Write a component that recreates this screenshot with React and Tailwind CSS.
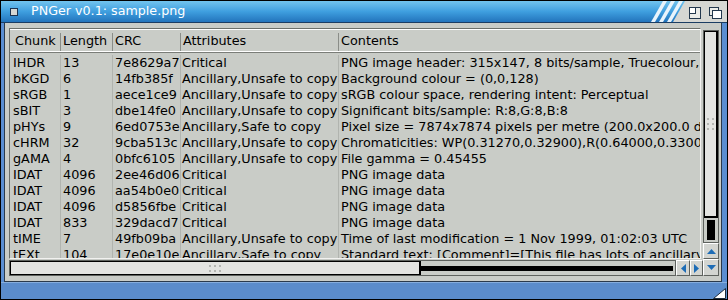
import React from 'react';

const chunks = [
  ['IHDR', '13', '7e8629a7', 'Critical', 'PNG image header: 315x147, 8 bits/sample, Truecolour, non-interlaced'],
  ['bKGD', '6', '14fb385f', 'Ancillary,Unsafe to copy', 'Background colour = (0,0,128)'],
  ['sRGB', '1', 'aece1ce9', 'Ancillary,Unsafe to copy', 'sRGB colour space, rendering intent: Perceptual'],
  ['sBIT', '3', 'dbe14fe0', 'Ancillary,Unsafe to copy', 'Significant bits/sample: R:8,G:8,B:8'],
  ['pHYs', '9', '6ed0753e', 'Ancillary,Safe to copy', 'Pixel size = 7874x7874 pixels per metre (200.0x200.0 dpi)'],
  ['cHRM', '32', '9cba513c', 'Ancillary,Unsafe to copy', 'Chromaticities: WP(0.31270,0.32900),R(0.64000,0.33000),G(0.30000,0.60000)'],
  ['gAMA', '4', '0bfc6105', 'Ancillary,Unsafe to copy', 'File gamma = 0.45455'],
  ['IDAT', '4096', '2ee46d06', 'Critical', 'PNG image data'],
  ['IDAT', '4096', 'aa54b0e0', 'Critical', 'PNG image data'],
  ['IDAT', '4096', 'd5856fbe', 'Critical', 'PNG image data'],
  ['IDAT', '833', '329dacd7', 'Critical', 'PNG image data'],
  ['tIME', '7', '49fb09ba', 'Ancillary,Unsafe to copy', 'Time of last modification = 1 Nov 1999, 01:02:03 UTC'],
  ['tEXt', '104', '17e0e10e', 'Ancillary,Safe to copy', 'Standard text: [Comment]=[This file has lots of ancillary chunks]'],
];

const headers = ['Chunk', 'Length', 'CRC', 'Attributes', 'Contents'];

const headCols = [
  'w-[51px] pl-[5px] border-r border-[#8a8d88]',
  'w-[52px] pl-[2px] border-r border-[#8a8d88]',
  'w-[68px] pl-[2px] border-r border-[#8a8d88]',
  'w-[158px] pl-[2px] border-r border-[#8a8d88]',
  'flex-1 min-w-0 pl-[2px]',
];

const bodyCols = [
  'w-[51px] pl-[3px] border-r border-[#b1b4af]',
  'w-[52px] pl-[2px] border-r border-[#b1b4af]',
  'w-[68px] pl-[2px] border-r border-[#b1b4af]',
  'w-[158px] pl-[1px] border-r border-[#b1b4af]',
  'flex-1 min-w-0 pl-[2px]',
];

const Grip = ({ cols, rows }) => (
  <div className="flex flex-col gap-[3px]">
    {Array.from({ length: rows }).map((_, r) => (
      <div key={r} className="flex gap-[3px]">
        {Array.from({ length: cols }).map((_, c) => (
          <span key={c} className="w-[2px] h-[2px] bg-[#b4b6b2]" />
        ))}
      </div>
    ))}
  </div>
);

const ArrowButton = ({ className, dir }) => {
  const pts = {
    up: '0,5 4.5,0 9,5',
    down: '0,0 9,0 4.5,5',
    left: '5,0 5,9 0,4.5',
    right: '0,0 0,9 5,4.5',
  }[dir];
  const vertical = dir === 'up' || dir === 'down';
  return (
    <div className={`flex items-center justify-center bg-[#d3d5d1] border-t border-l border-t-white border-l-white border-b border-r border-b-[#5e625e] border-r-[#5e625e] ${className}`}>
      <svg width={vertical ? 9 : 5} height={vertical ? 5 : 9}>
        <polygon points={pts} fill="#1d6cb6" />
      </svg>
    </div>
  );
};

const TitleStripes = () => (
  <svg width="44" height="21" className="block">
    <defs>
      <linearGradient id="tb" x1="0" y1="0" x2="0" y2="1">
        <stop offset="0" stopColor="#72c4ee" />
        <stop offset="0.5" stopColor="#3f9fdf" />
        <stop offset="1" stopColor="#2374bc" />
      </linearGradient>
    </defs>
    <rect width="44" height="21" fill="#d6d7d3" />
    <polygon points="0,0 44,0 32,21 0,21" fill="url(#tb)" />
    <polygon points="22,0 26,0 14,21 10,21" fill="#e8f4fc" />
    <polygon points="30,0 34,0 22,21 18,21" fill="#e8f4fc" />
    <polygon points="38,0 42,0 30,21 26,21" fill="#e8f4fc" />
  </svg>
);

const App = () => {
  return (
    <div className="w-[728px] h-[300px] bg-black p-px flex flex-col font-['DejaVu_Sans',sans-serif] text-black select-none overflow-hidden">
      {/* title bar */}
      <div className="h-[22px] flex border-b border-[#1b3d63]">
        <div className="flex-1 flex items-center bg-linear-to-b from-[#72c4ee] via-[#3f9fdf] to-[#2374bc]">
          <div className="ml-[9px] w-[8px] h-[8px] bg-[#d6d7d3] border border-[#1c3350]" />
          <span className="ml-[13px] text-[12.7px] leading-none text-white">PNGer v0.1: sample.png</span>
        </div>
        <TitleStripes />
        <div className="w-[42px] bg-[#d6d7d3] flex items-start pt-[6px]">
          <svg width="13" height="12" className="ml-[4px]">
            <rect x="0.5" y="0.5" width="11" height="11" fill="#eaebe8" stroke="#24384e" />
            <rect x="0.5" y="0.5" width="6" height="6" fill="#ffffff" stroke="#24384e" />
          </svg>
          <svg width="14" height="13" className="ml-[7px]">
            <rect x="0.5" y="0.5" width="9" height="8" fill="#eaebe8" stroke="#24384e" />
            <rect x="3.5" y="3.5" width="9" height="8" fill="#ffffff" stroke="#24384e" />
          </svg>
        </div>
      </div>

      {/* middle */}
      <div className="flex-1 flex min-h-0">
        <div className="w-[3px] bg-[#5a8ed2]" />
        <div className="flex-1 flex bg-[#c9ccc7] border-l border-r border-b border-[#2a3a4c] pl-[4px] pt-[5px] pr-[2px] pb-[5px] min-w-0">
          {/* list + horizontal scroller */}
          <div className="flex-1 flex flex-col min-w-0">
            <div className="h-[231px] mr-[2px] flex flex-col border border-t-[#6c706b] border-l-[#6c706b] border-b-[#f2f2f0] border-r-[#f2f2f0] overflow-hidden text-[12.8px] leading-[16px]">
              <div className="h-[23px] flex border-t border-b border-white pt-[3px]">
                {headers.map((h, i) => (
                  <div key={h} className={`${headCols[i]} whitespace-nowrap overflow-hidden`}>
                    {h}
                  </div>
                ))}
              </div>
              <div className="h-px bg-[#7a7d78]" />
              <div className="flex-1 flex flex-col pt-[2px] overflow-hidden">
                {chunks.map((row, r) => (
                  <div key={r} className="h-[16px] flex shrink-0">
                    {row.map((cell, i) => (
                      <div key={i} className={`${bodyCols[i]} whitespace-nowrap overflow-hidden`}>
                        {cell}
                      </div>
                    ))}
                  </div>
                ))}
              </div>
            </div>
            <div className="mt-[1px] h-[16px] flex">
              <div className="flex-1 flex items-center border border-[#5e625e] bg-[#c9ccc7]">
                <div className="w-[411px] h-full flex items-center justify-center bg-[#e3e4e1] border border-r-2 border-black">
                  <Grip cols={3} rows={2} />
                </div>
                <div className="flex-1 h-[5px] bg-black mr-[2px]" />
              </div>
              <ArrowButton dir="left" className="w-[14px] h-full" />
              <ArrowButton dir="right" className="w-[13px] h-full" />
            </div>
          </div>

          {/* vertical scroller */}
          <div className="w-[16px] flex flex-col pt-[2px]">
            <div className="h-[213px] flex flex-col border border-[#5e625e] bg-[#c9ccc7]">
              <div className="h-[187px] flex items-center justify-center bg-[#e3e4e1] border border-b-2 border-r-2 border-black">
                <Grip cols={2} rows={3} />
              </div>
              <div className="flex-1 mx-[3px] my-[2px] bg-black" />
            </div>
            <ArrowButton dir="up" className="h-[16px]" />
            <ArrowButton dir="down" className="h-[17px]" />
          </div>
        </div>
        <div className="w-[5px] bg-[#5a8ed2]" />
      </div>

      {/* bottom border */}
      <div className="h-[17px] flex justify-end items-end bg-[#5b8ccb] border-t border-[#86addd]">
        <svg width="13" height="11" className="mr-[1px]">
          <polygon points="12.5,0.5 12.5,10.5 0.5,10.5" fill="#ffffff" stroke="#1b2b3c" />
        </svg>
      </div>
    </div>
  );
};

export default App;
